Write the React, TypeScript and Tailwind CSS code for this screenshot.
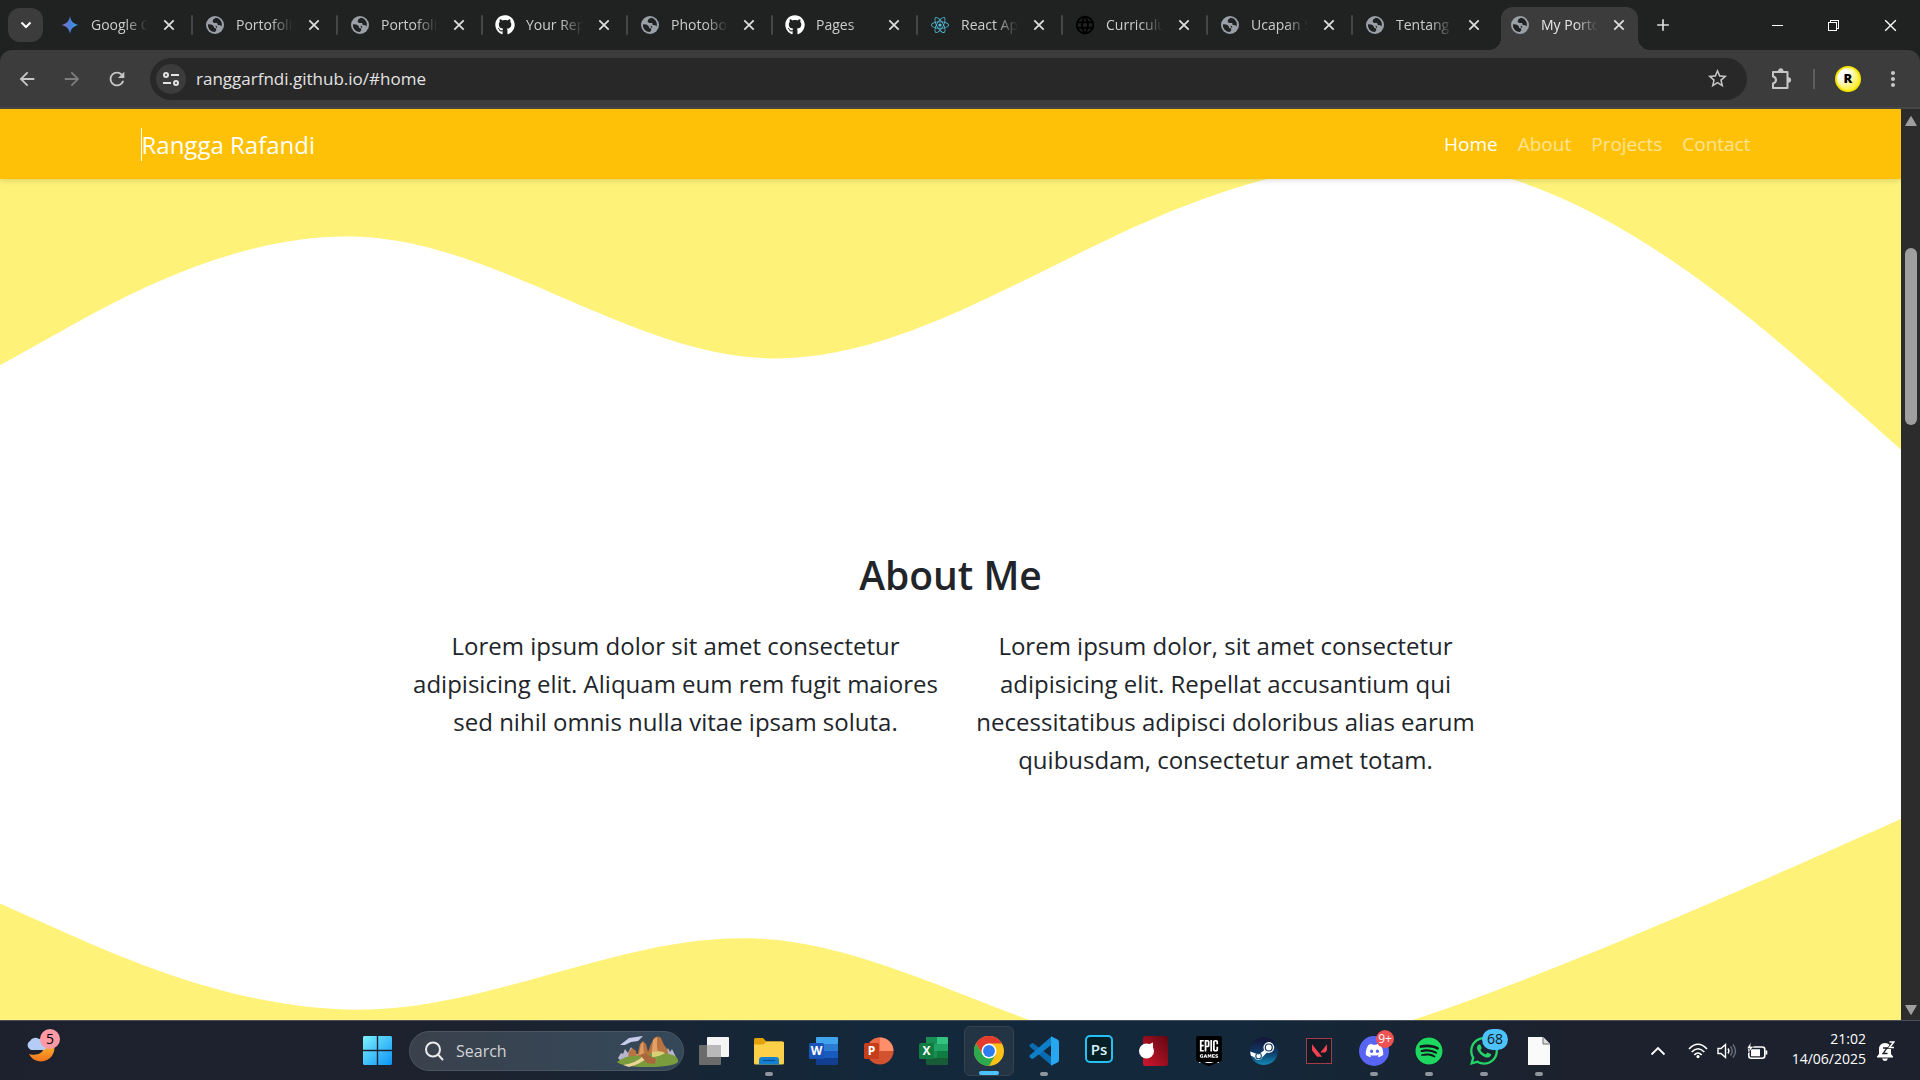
import React, { ReactNode } from "react";
import { FaDiscord, FaGithub, FaReact, FaSpotify, FaWhatsapp } from "react-icons/fa";
import { SiEpicgames, SiValorant } from "react-icons/si";
import { VscChromeMinimize, VscChromeRestore, VscChromeClose } from "react-icons/vsc";
import { MdArrowBack, MdArrowForward, MdRefresh, MdStarBorder, MdMoreVert, MdAdd } from "react-icons/md";
import { TbWorld } from "react-icons/tb";

function GlobeIcon() {
  return (
    <svg viewBox="0 0 18 18" className="size-[18px]">
      <circle cx="9" cy="9" r="9" fill="#9aa0a8" />
      <path d="M9.8 1.8 7.2 3.6 6.6 6l1.8.9 2.8.1.5 2 2.6.2 1.2 1.2A6.6 6.6 0 0 0 9.8 1.8Z" fill="#202221" />
      <path d="M1.9 8.2A7 7 0 0 0 9 16.1l1.2-1.8V12.6L8.2 11.9 7.6 9.9 5.4 8.6Z" fill="#202221" />
      <path d="M11.2 10.4 9.6 9.6 9.9 11.6 11 11.8Z" fill="#202221" />
    </svg>
  );
}

function SparkIcon() {
  return (
    <svg viewBox="0 0 18 18" className="size-[18px]">
      <defs>
        <linearGradient id="spark" x1="0" x2="1">
          <stop offset="0" stopColor="#9a6fc4" />
          <stop offset="0.5" stopColor="#4a80dc" />
          <stop offset="1" stopColor="#2fa5e8" />
        </linearGradient>
      </defs>
      <path d="M9 0C9.6 5 13 8.400 18 9 13 9.600 9.600 13 9 18 8.400 13 5 9.600 0 9 5 8.400 8.400 5 9 0Z" fill="url(#spark)" />
    </svg>
  );
}

type Tab = { title: string; icon: ReactNode; active?: boolean };

const github = <FaGithub className="size-5 text-white" />;

const tabs: Tab[] = [
  { title: "Google Gemini", icon: <SparkIcon /> },
  { title: "Portofolio", icon: <GlobeIcon /> },
  { title: "Portofolio", icon: <GlobeIcon /> },
  { title: "Your Repositories", icon: github },
  { title: "Photobooth", icon: <GlobeIcon /> },
  { title: "Pages", icon: github },
  { title: "React App", icon: <FaReact className="size-[18px] text-[#52c1de]" /> },
  { title: "Curriculum", icon: <TbWorld className="size-[22px] shrink-0 text-black" /> },
  { title: "Ucapan Selamat", icon: <GlobeIcon /> },
  { title: "Tentang", icon: <GlobeIcon /> },
  { title: "My Portofolio", icon: <GlobeIcon />, active: true },
];

function TabItem({ tab, divider }: { tab: Tab; divider: boolean }) {
  return (
    <div
      className={
        tab.active
          ? "relative mx-[3px] mt-[7px] flex h-[43px] w-[137px] items-center rounded-t-xl bg-[#3c3c3c] pb-[7px] pl-[10px] before:absolute before:bottom-0 before:-left-3 before:size-3 before:bg-[radial-gradient(circle_at_0_0,transparent_12px,#3c3c3c_12px)] after:absolute after:-right-3 after:bottom-0 after:size-3 after:bg-[radial-gradient(circle_at_100%_0,transparent_12px,#3c3c3c_12px)]"
          : "relative flex h-[50px] w-[145px] items-center pl-[13px]"
      }
    >
      <button className="flex items-center gap-[9px]">
        <span className="flex size-[18px] shrink-0 items-center justify-center [&>svg]:shrink-0">{tab.icon}</span>
        <span className={"block w-[60px] overflow-hidden pl-[3px] text-left text-sm whitespace-nowrap [mask-image:linear-gradient(to_right,black_62%,transparent)] " + (tab.active ? "text-[#e8e8e8]" : "text-[#cdcdcd]")}>
          {tab.title}
        </span>
      </button>
      <button aria-label={"Close " + tab.title} className="ml-3 flex items-center">
        <svg viewBox="0 0 18 18" className="size-[18px]" fill="none" stroke="#dcdcdc" strokeWidth="1.800">
          <path d="M4.300 4.300 13.700 13.700M13.700 4.300 4.300 13.700" />
        </svg>
      </button>
      {divider && <span className="absolute right-0 h-5 w-0.5 rounded bg-[#454646]" />}
    </div>
  );
}

function TabStrip() {
  return (
    <div className="flex h-[50px] shrink-0 bg-[#202221] pl-2">
      <button aria-label="Search tabs" className="mt-2 mr-[5px] flex h-[34px] w-[35px] items-center justify-center rounded-xl bg-[#3c3c3c]">
        <svg viewBox="0 0 12 12" className="size-3" fill="none" stroke="#fff" strokeWidth="2">
          <path d="M1.500 3.500 6 8l4.500-4.500" />
        </svg>
      </button>
      {tabs.map((t, i) => (
        <TabItem key={i} tab={t} divider={i < 9} />
      ))}
      <button aria-label="New tab" className="ml-3 flex items-center">
        <MdAdd className="size-5 text-[#dcdcdc]" />
      </button>
      <div className="ml-auto flex text-white">
        <button aria-label="Minimize" className="flex w-14 items-center justify-center"><VscChromeMinimize className="size-4" /></button>
        <button aria-label="Restore" className="flex w-14 items-center justify-center"><VscChromeRestore className="size-4" /></button>
        <button aria-label="Close window" className="flex w-[59px] items-center justify-center"><VscChromeClose className="size-[17px]" /></button>
      </div>
    </div>
  );
}

function Toolbar() {
  return (
    <div className="shrink-0 bg-[#202221]">
      <div className="flex h-[59px] items-center rounded-t-xl border-b-2 border-[#464646] bg-[#3c3c3c] pr-[15px] pl-4 text-[#c7c7c7]">
        <button aria-label="Back" className="mr-[23px]"><MdArrowBack className="size-[22px]" /></button>
        <button aria-label="Forward" className="mr-[23px] text-[#7d7d7d]"><MdArrowForward className="size-[22px]" /></button>
        <button aria-label="Reload" className="mr-[22px]"><MdRefresh className="size-[22px]" /></button>
        <div className="flex h-[42px] flex-1 items-center rounded-full bg-[#282828] pr-[18px] pl-1.5">
          <button aria-label="Site information" className="mr-[10px] flex size-[30px] items-center justify-center rounded-full bg-[#3c3c3c]">
            <svg viewBox="0 0 16 16" className="size-4" fill="none" stroke="#e3e3e3" strokeWidth="2">
              <circle cx="3" cy="4" r="2" />
              <path d="M8 4h8M0 12h8" />
              <circle cx="13" cy="12" r="2" />
            </svg>
          </button>
          <input aria-label="Address" defaultValue="ranggarfndi.github.io/#home" className="min-w-0 flex-1 bg-transparent text-[17px] text-[#e3e3e3] outline-none" />
          <button aria-label="Bookmark"><MdStarBorder className="size-[23px]" /></button>
        </div>
        <button aria-label="Extensions" className="ml-[22px]">
          <svg viewBox="0 0 24 24" className="size-6" fill="none" stroke="currentColor" strokeWidth="2" strokeLinejoin="round">
            <path d="M4 5h14.500v16H4v-4.500c2.200-.6 3-1.700 3-3.500S6.200 10 4 9.500Z" />
            <path d="M9.500 4a2.300 2.300 0 0 1 4.600 0ZM19.500 10.700a2.300 2.300 0 0 1 0 4.600Z" fill="currentColor" strokeWidth="1" />
          </svg>
        </button>
        <span className="ml-5 h-5 w-0.5 bg-[#5e5e5e]" />
        <button aria-label="Profile" className="ml-5 flex size-[26px] items-center justify-center rounded-full border-2 border-[#f7e600] bg-[radial-gradient(circle_at_30%_30%,#ffffff_20%,#fff04a_70%)] text-[13px] font-extrabold text-black">R</button>
        <button aria-label="Menu" className="ml-5"><MdMoreVert className="size-6" /></button>
      </div>
    </div>
  );
}

const links = ["About", "Projects", "Contact"];

/* Waves are uniform cubic B-splines over a 1440-unit wide canvas. */
function wave(p: number[]) {
  const s = 288;
  let d = `M0,${p[0]}L${s / 6},${(5 * p[0] + p[1]) / 6}`;
  for (let i = 1; i <= p.length; i++) {
    const a = p[i - 1];
    const b = p[Math.min(i, p.length - 1)];
    const c = p[Math.min(i + 1, p.length - 1)];
    const xa = (i - 1) * s;
    const xb = Math.min(i, p.length - 1) * s;
    const xc = Math.min(i + 1, p.length - 1) * s;
    d += `C${(2 * xa + xb) / 3},${(2 * a + b) / 3},${(xa + 2 * xb) / 3},${(a + 2 * b) / 3},${(xa + 4 * xb + xc) / 6},${(a + 4 * b + c) / 6}`;
  }
  return d;
}

function Page() {
  return (
    <div className="flex min-w-0 flex-1 flex-col overflow-hidden bg-white text-[#212529]">
      <nav className="z-10 flex h-[70px] shrink-0 items-center justify-center bg-[#ffc107] shadow-[0_2px_5px_rgba(0,0,0,0.12)]">
        <div className="flex w-full max-w-[1650px] items-center justify-between px-[15px]">
          <a href="#home" className="border-l border-white text-2xl leading-[33px] text-white">Rangga Rafandi</a>
          <div className="flex text-[19px]">
            <a href="#home" className="px-[10px] font-medium text-white">Home</a>
            {links.map((l) => (
              <a key={l} href={"#" + l.toLowerCase()} className="px-[10px] text-white/55">{l}</a>
            ))}
          </div>
        </div>
      </nav>
      <svg viewBox="0 115 1440 205" className="block w-full shrink-0 bg-[#fff278]">
        <path d={wave([256, 96, 320, 128, 64, 320]) + "L1440,330L0,330Z"} fill="#ffffff" />
      </svg>
      <section className="flex shrink-0 flex-col items-center pt-[100px] pb-10 text-center">
        <h2 className="mb-[27px] text-[39px] leading-[50px] font-semibold">About Me</h2>
        <div className="flex w-full max-w-[1650px] justify-center gap-1 text-2xl leading-[38px]">
          <p className="w-[546px]">Lorem ipsum dolor sit amet consectetur adipisicing elit. Aliquam eum rem fugit maiores sed nihil omnis nulla vitae ipsam soluta.</p>
          <p className="w-[546px]">Lorem ipsum dolor, sit amet consectetur adipisicing elit. Repellat accusantium qui necessitatibus adipisci doloribus alias earum quibusdam, consectetur amet totam.</p>
        </div>
      </section>
      <svg viewBox="0 0 1440 160" className="block w-full shrink-0">
        <path d={wave([64, 192, 32, 224, 128, 0]) + "L1440,330L0,330Z"} fill="#fff278" />
      </svg>
    </div>
  );
}

function Scrollbar() {
  return (
    <div className="flex w-[19px] shrink-0 flex-col items-center bg-[#2c2c2c] py-1">
      <svg viewBox="0 0 12 12" className="mt-0.5 size-3"><path d="M6 1.500 11.300 10.500H.7Z" fill="#9f9f9f" stroke="#9f9f9f" strokeLinejoin="round" /></svg>
      <div className="mt-[121px] h-[177px] w-3 rounded-full bg-[#9f9f9f]" />
      <svg viewBox="0 0 12 12" className="mt-auto size-3"><path d="M6 10.500 11.300 1.500H.7Z" fill="#9f9f9f" stroke="#9f9f9f" strokeLinejoin="round" /></svg>
    </div>
  );
}

function OfficeIcon({ letter, c }: { letter: string; c: string[] }) {
  return (
    <svg viewBox="0 0 30 30" className="size-[30px]">
      {letter === "P" ? (
        <>
          <circle cx="16" cy="15" r="13.500" fill={c[3]} />
          <path d="M16 1.500A13.500 13.500 0 0 0 2.500 15H16Z" fill={c[1]} />
          <path d="M16 1.500A13.500 13.500 0 0 1 29.500 15H16Z" fill={c[0]} />
        </>
      ) : (
        <>
          <rect x="7" y="1" width="22" height="28" rx="1.500" fill={c[3]} />
          <rect x="7" y="1" width="22" height="7" rx="1" fill={c[0]} />
          <rect x="7" y="8" width="22" height="7" fill={c[1]} />
          <rect x="7" y="15" width="22" height="7" fill={c[2]} />
          {letter === "X" && <path d="M7 2a1 1 0 0 1 1-1h10v7H7ZM18 15v7H7v-7Z" fill={c[5]} />}
        </>
      )}
      <rect x="0" y="7" width="15" height="16" rx="1.500" fill={c[4]} />
      <text x="7.500" y="19" textAnchor="middle" fontSize="12" fontWeight="700" fill="#fff" fontFamily="Open Sans, sans-serif">{letter}</text>
    </svg>
  );
}

function ChromeIcon() {
  return (
    <svg viewBox="0 0 48 48" className="size-[30px]">
      <circle cx="24" cy="24" r="24" fill="#fbc116" />
      <path d="M24 12H44.800A24 24 0 0 0 3.200 12L13.600 30Z" fill="#e33b2e" />
      <path d="M3.200 12A24 24 0 0 0 24 48L34.400 30 24 34 13.600 30Z" fill="#2da94f" />
      <circle cx="24" cy="24" r="12" fill="#fff" />
      <circle cx="24" cy="24" r="9.500" fill="#2f7cf0" />
    </svg>
  );
}

function VsCodeIcon() {
  return (
    <svg viewBox="0 0 30 30" className="size-[30px]">
      <path d="M22 29 .8 10.700Q0 9.700 .8 8.700L2.700 7.200Q3.500 6.700 4.500 7.400L25 23Z" fill="#0a6bb0" />
      <path d="M22 1 .8 19.300Q0 20.300 .8 21.300L2.700 22.800Q3.500 23.300 4.500 22.600L25 7Z" fill="#0e7fc7" />
      <path d="M22 .3 28.500 3.500Q30 4.200 30 6V24Q30 25.800 28.500 26.500L22 29.700Z" fill="#29a6f0" />
    </svg>
  );
}

function SteamIcon() {
  return (
    <svg viewBox="0 0 28 28" className="size-7">
      <defs>
        <linearGradient id="steam" x2="0" y2="1">
          <stop offset="0.1" stopColor="#151a3c" />
          <stop offset="0.550" stopColor="#0f3a68" />
          <stop offset="1" stopColor="#1389b8" />
        </linearGradient>
      </defs>
      <circle cx="14" cy="14" r="14" fill="url(#steam)" />
      <path d="M.2 14.500 8.500 17.500 14.500 13 14 9.500 19 10 22 14.500 17 15.500 12.500 20A4.300 4.300 0 0 1 4.500 20.500L.8 18.500Z" fill="#fff" />
      <circle cx="18.800" cy="10.500" r="5.400" fill="#fff" />
      <circle cx="18.800" cy="10.500" r="3.500" fill="none" stroke="#173a63" strokeWidth="1.200" />
      <circle cx="8.600" cy="19" r="2.800" fill="none" stroke="#14507f" strokeWidth="1.100" />
    </svg>
  );
}

function ExplorerIcon() {
  return (
    <svg viewBox="0 0 30 28" className="h-7 w-[30px]">
      <path d="M0 2.500Q0 1 1.500 1H9L12.500 4.500H28Q30 4.500 30 6V12H0Z" fill="#e2a20a" />
      <path d="M0 7.500H9.500L12.500 4.500H28.500Q30 4.500 30 6V26Q30 27.500 28.500 27.500H1.500Q0 27.500 0 26Z" fill="#fdd04a" />
      <path d="M5 27.500V23Q5 20 8 20H22Q25 20 25 23V27.500Z" fill="#1480d2" />
      <path d="M9 23.500H21" stroke="#0b4f8c" strokeWidth="1.200" />
    </svg>
  );
}

function TaskViewIcon() {
  return (
    <svg viewBox="0 0 30 28" className="h-7 w-[30px]">
      <rect x="8" y="0" width="22" height="20" rx="1" fill="#f4f4f4" />
      <rect x="0" y="8" width="22" height="20" rx="1" fill="#6b6b6b" />
      <rect x="8" y="8" width="14" height="12" fill="#b9b9b9" />
    </svg>
  );
}

type AppEntry = { name: string; icon: ReactNode; running?: boolean; active?: boolean; badge?: ReactNode };

const apps: AppEntry[] = [
  { name: "Task view", icon: <TaskViewIcon /> },
  { name: "File Explorer", icon: <ExplorerIcon />, running: true },
  { name: "Word", icon: <OfficeIcon letter="W" c={["#41a5ee", "#2b7cd3", "#185abd", "#103f91", "#1b54b8"]} /> },
  { name: "PowerPoint", icon: <OfficeIcon letter="P" c={["#ff8f6b", "#ed6c47", "", "#d35230", "#c43e1c"]} /> },
  { name: "Excel", icon: <OfficeIcon letter="X" c={["#33c481", "#21a366", "#107c41", "#185c37", "#107c41", "#1a8f55"]} /> },
  { name: "Chrome", icon: <ChromeIcon />, active: true },
  { name: "VS Code", icon: <VsCodeIcon />, running: true },
  {
    name: "Photoshop",
    icon: <span className="mb-[3px] flex size-7 items-center justify-center rounded-[5px] border-2 border-[#26c0f5] bg-[#061e26] text-[15px] font-semibold text-[#d6f3ff]">Ps</span>,
  },
  {
    name: "Player",
    icon: (
      <svg viewBox="0 0 30 30" className="size-[30px]">
        <defs><linearGradient id="red" x1="1" y1="0" x2="0" y2="1"><stop offset="0" stopColor="#5f0810" /><stop offset="1" stopColor="#d3152f" /></linearGradient></defs>
        <rect x="4" y="0" width="25" height="30" rx="2.500" fill="url(#red)" />
        <circle cx="7.500" cy="15" r="7.500" fill="#fff" />
        <path d="M14 6.500V14H8L9.500 8.500Z" fill="#fff" />
      </svg>
    ),
  },
  {
    name: "Epic Games",
    icon: (
      <span className="flex size-[30px] items-center justify-center bg-[linear-gradient(#fff,#fff)] bg-[length:20px_25px] bg-[position:center_2px] bg-no-repeat">
        <SiEpicgames className="size-[30px] text-black" />
      </span>
    ),
  },
  { name: "Steam", icon: <SteamIcon /> },
  {
    name: "Valorant",
    icon: <span className="flex size-[26px] items-center justify-center border border-[#a23a48] bg-[#101a24]"><SiValorant className="size-[15px] text-[#f4404f]" /></span>,
  },
  {
    name: "Discord",
    icon: <span className="flex size-[30px] items-center justify-center rounded-full bg-[#5865f2]"><FaDiscord className="size-[19px] text-white" /></span>,
    running: true,
    badge: <span className="absolute top-1 left-[27px] flex size-[18px] items-center justify-center rounded-full bg-[#ee5253] text-xs text-white">9+</span>,
  },
  { name: "Spotify", icon: <span className="rounded-full bg-[#10161c]"><FaSpotify className="size-7 text-[#1ed760]" /></span>, running: true },
  {
    name: "WhatsApp",
    icon: <FaWhatsapp className="size-8 text-[#25d366]" />,
    running: true,
    badge: <span className="absolute top-[3px] left-[23px] flex h-[21px] w-[26px] items-center justify-center rounded-full bg-[#4cc2ff] text-sm text-[#101820]">68</span>,
  },
  {
    name: "Document",
    icon: (
      <svg viewBox="0 0 22 28" className="h-7 w-[22px]">
        <path d="M0 0H15L22 7V28H0Z" fill="#fafafa" />
        <path d="M15 0V7H22" fill="#dcdcdc" stroke="#6f6f6f" />
      </svg>
    ),
    running: true,
  },
];

function SearchArt() {
  return (
    <svg viewBox="0 0 62 32" className="h-8 w-[62px]">
      <path d="M1 23 4 18 6 19 8 14 11 18 14 12 18 19H48L51 13 53 17 55 14 60 24 56 28H6Z" fill="#b9b5d0" />
      <path d="M3 10 12 3 26 1 21 6 14 7 8 10Z" fill="#c9cbea" />
      <path d="M10 27 12 17 15 13 19 16 20 22 23 9 26 6 29 9 31 17 34 9 37 3Q41 0 44 3L47 10 50 14 54 27Z" fill="#b9733f" />
      <path d="M36 5 40 2 40 12 42 24H34Z" fill="#e3a066" />
      <path d="M24 9 26 7 27 20H22Z" fill="#dd9a62" />
      <path d="M0 27Q12 18 26 22 38 14 56 20 62 23 61 27 56 32 30 32 6 32 0 27Z" fill="#7a9c3c" />
      <path d="M35 17Q45 15 48 18 42 22 35 22Z" fill="#d8cf78" />
      <path d="M6 30Q20 28 27 20L31 22Q24 29 12 32Z" fill="#ecd39a" />
      <path d="M23 20 28 18 33 21 39 24 38 29 30 28Z" fill="#a8683c" />
    </svg>
  );
}

function Taskbar() {
  return (
    <footer className="flex h-[60px] shrink-0 items-center border-t border-[#46505c] bg-[linear-gradient(to_right,#1c212d_0%,#1c222e_25%,#13283a_45%,#13283a_65%,#1c212e_80%,#1c212d_100%)] text-white">
      <div className="flex flex-1 items-center pl-[25px]">
        <button aria-label="Weather" className="relative">
          <svg viewBox="0 0 36 38" className="h-[38px] w-9">
            <defs><linearGradient id="moon" x2="0" y2="1"><stop offset="0" stopColor="#fbc02d" /><stop offset="1" stopColor="#f2731d" /></linearGradient></defs>
            <path d="M28 10A13 13 0 1 1 4 22Q18 26 21 11Z" fill="url(#moon)" />
            <path d="M6 18A5 5 0 0 1 5 9 6 6 0 0 1 14 7 6 6 0 0 1 19 18Z" fill="#b5cdf6" />
          </svg>
          <span className="absolute -top-[3px] left-[15px] flex size-5 items-center justify-center rounded-full bg-[#ff99a4] text-sm text-black">5</span>
        </button>
      </div>
      <div className="flex items-center pl-[7px]">
        <button aria-label="Start" className="mr-[17px]">
          <svg viewBox="0 0 29 29" className="size-[29px]">
            <defs><linearGradient id="win" x2="1" y2="1"><stop offset="0" stopColor="#7df0ff" /><stop offset="1" stopColor="#0a93f5" /></linearGradient></defs>
            <path d="M1 0H13.800V13.800H0V1ZM15.200 0H28L29 1V13.800H15.200ZM0 15.200H13.800V29H1L0 28ZM15.200 15.200H29V28L28 29H15.200Z" fill="url(#win)" />
          </svg>
        </button>
        <label className="flex h-10 w-[275px] items-center rounded-full border border-[#4b5662] bg-[linear-gradient(to_right,#3a414c,#34485a)] pr-1 pl-[14px]">
          <svg viewBox="0 0 20 20" className="size-5" fill="none" stroke="#e8eaec" strokeWidth="2"><circle cx="9" cy="8.500" r="7" /><path d="M14 13.500 18.500 18.500" strokeLinecap="round" /></svg>
          <input aria-label="Search" placeholder="Search" className="ml-3 w-0 flex-1 bg-transparent text-base outline-none placeholder:text-[#d0d3d7]" />
          <SearchArt />
        </label>
        <div className="ml-[5px] flex gap-[5px]">
          {apps.map((a) => (
            <button
              key={a.name}
              aria-label={a.name}
              className={"relative flex h-[50px] w-[50px] items-center justify-center rounded-md " + (a.active ? "border border-[#35424f] bg-[#233445]" : "")}
            >
              {a.icon}
              {a.badge}
              {a.running && <span className="absolute bottom-0 h-1 w-2 rounded-full bg-[#8f959c]" />}
              {a.active && <span className="absolute bottom-0 h-1 w-5 rounded-full bg-[#4cc2ff]" />}
            </button>
          ))}
        </div>
      </div>
      <div className="flex flex-1 items-center justify-end pr-[25px]">
        <button aria-label="Hidden icons" className="mr-[22px]">
          <svg viewBox="0 0 16 16" className="size-4" fill="none" stroke="#fff" strokeWidth="1.800"><path d="M1.500 11.500 8 5l6.500 6.500" /></svg>
        </button>
        <button aria-label="Network, sound and battery" className="mr-6 flex items-center gap-[9px]">
          <svg viewBox="0 0 20 16" className="h-4 w-5" fill="none" stroke="#fff" strokeWidth="1.700">
            <path d="M1 6Q10-3.500 19 6M3.700 9Q10 2.500 16.300 9M6.300 12Q10 8 13.700 12" />
            <circle cx="10" cy="13.600" r="1.600" fill="#fff" stroke="none" />
          </svg>
          <svg viewBox="0 0 20 16" className="h-4 w-5" fill="none" stroke="#fff" strokeWidth="1.400">
            <path d="M1 5.500H4L8.500 1.500V14.500L4 10.500H1Z" />
            <path d="M11 5.500Q12.800 8 11 10.500" />
            <path d="M13.500 3.500Q17 8 13.500 12.500M16 1.500Q21 8 16 14.500" stroke="#6b717b" />
          </svg>
          <svg viewBox="0 0 22 18" className="h-[18px] w-[22px]">
            <rect x="2.800" y="5" width="16" height="11.200" rx="2.500" fill="none" stroke="#fff" strokeWidth="1.600" />
            <path d="M5 7.200h9v7H5ZM19.500 8.500h1.800v4h-1.800Z" fill="#fff" />
            <path d="M5 0 .8 6.500H3.500L2.500 11 7.500 4.500H4.600Z" fill="#fff" stroke="#1c212d" strokeWidth=".6" />
          </svg>
        </button>
        <button className="pb-[3px] text-right text-sm leading-5"><span className="block">21:02</span><span className="block">14/06/2025</span></button>
        <button aria-label="Notifications" className="ml-[11px]">
          <svg viewBox="0 0 18 20" className="h-5 w-[18px]">
            <path d="M2 8.500Q2 2 8 2 14 2 14 8.500V13L16 15.500V16.500H0V15.500L2 13ZM5 17.500H11Q10 20 8 20 6 20 5 17.500Z" fill="#fff" />
            <path d="M6 7H10L6 12.500H10.500" fill="none" stroke="#1c212d" strokeWidth="1.300" />
            <path d="M12.500 1H16.800L12.500 6.500H17" fill="none" stroke="#1c212d" strokeWidth="3" />
            <path d="M12.500 1H16.800L12.500 6.500H17" fill="none" stroke="#fff" strokeWidth="1.500" />
          </svg>
        </button>
      </div>
    </footer>
  );
}

export default function App() {
  return (
    <div className="flex h-screen flex-col overflow-hidden font-['Open_Sans','Noto_Sans',sans-serif]">
      <TabStrip />
      <Toolbar />
      <main className="flex min-h-0 flex-1">
        <Page />
        <Scrollbar />
      </main>
      <Taskbar />
    </div>
  );
}
